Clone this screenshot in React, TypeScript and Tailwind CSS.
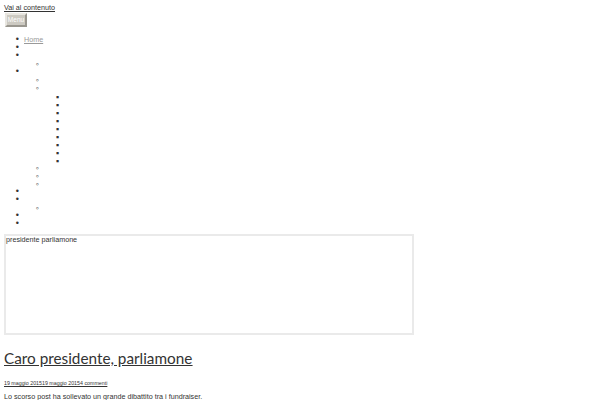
import React from 'react';

// marqueurs de liste écrits à la main pour coller aux puces de la capture
const disc = "list-['•__'] marker:text-[9px]";
const circle = "list-['◦__'] marker:text-[9px] marker:text-[#333]";
const square = "list-['▪__'] marker:text-[8px]";

const Item: React.FC = () => <li className="h-2">&nbsp;</li>;

const Line: React.FC = () => <div className="h-2">&nbsp;</div>;

const App: React.FC = () => {
    return (
        <div className="h-[400px] overflow-hidden bg-white px-1 pt-1 text-[7.2px] leading-[8px] text-[#333] font-['Liberation_Sans',Arial,sans-serif]">
            <div className="h-2">
                <a href="#" className="underline text-[#333]">Vai al contenuto</a>
            </div>
            <button className="mt-px ml-px flex h-[14px] w-[22px] items-center justify-center border-2 border-[#e8e6e0] border-b-[#9a978f] border-r-[#9a978f] bg-[#cdcac2] p-0 text-[6.5px] leading-[8px] text-white">
                Menu
            </button>
            <ul className={`${disc} mt-2 h-[192px] pl-5`}>
                <li className="h-2"><a href="#" className="underline text-[#999]">Home</a></li>
                <Item />
                <li className="h-4">
                    <Line />
                    <ul className={`${circle} pl-5`}>
                        <Item />
                    </ul>
                </li>
                <li className="h-[120px]">
                    <Line />
                    <ul className={`${circle} pl-5`}>
                        <Item />
                        <li className="h-20">
                            <Line />
                            <ul className={`${square} pl-5`}>
                                {Array.from({ length: 9 }).map((_, i) => (
                                    <Item key={i} />
                                ))}
                            </ul>
                        </li>
                        <Item />
                        <Item />
                        <Item />
                    </ul>
                </li>
                <Item />
                <li className="h-4">
                    <Line />
                    <ul className={`${circle} pl-5`}>
                        <Item />
                    </ul>
                </li>
                <Item />
                <Item />
            </ul>
            <div className="mt-[7px] h-[101px] w-[410px] border-2 border-[#eaeaea] text-[7.2px] leading-[8px]">
                presidente parliamone
            </div>
            <h1 className="mt-[12px] h-[22px] text-[15.3px] leading-[22px] font-normal underline text-[#333] font-['Lato',sans-serif]">
                <a href="#">Caro presidente, parliamone</a>
            </h1>
            <div className="mt-[10px] h-2 text-[5.3px] leading-[8px] underline">
                19 maggio 201519 maggio 20154 commenti
            </div>
            <p className="mt-[6px] h-2">
                Lo <a href="#" className="underline">scorso post</a> ha sollevato un grande dibattito tra i fundraiser.
            </p>
        </div>
    );
};

export default App;
